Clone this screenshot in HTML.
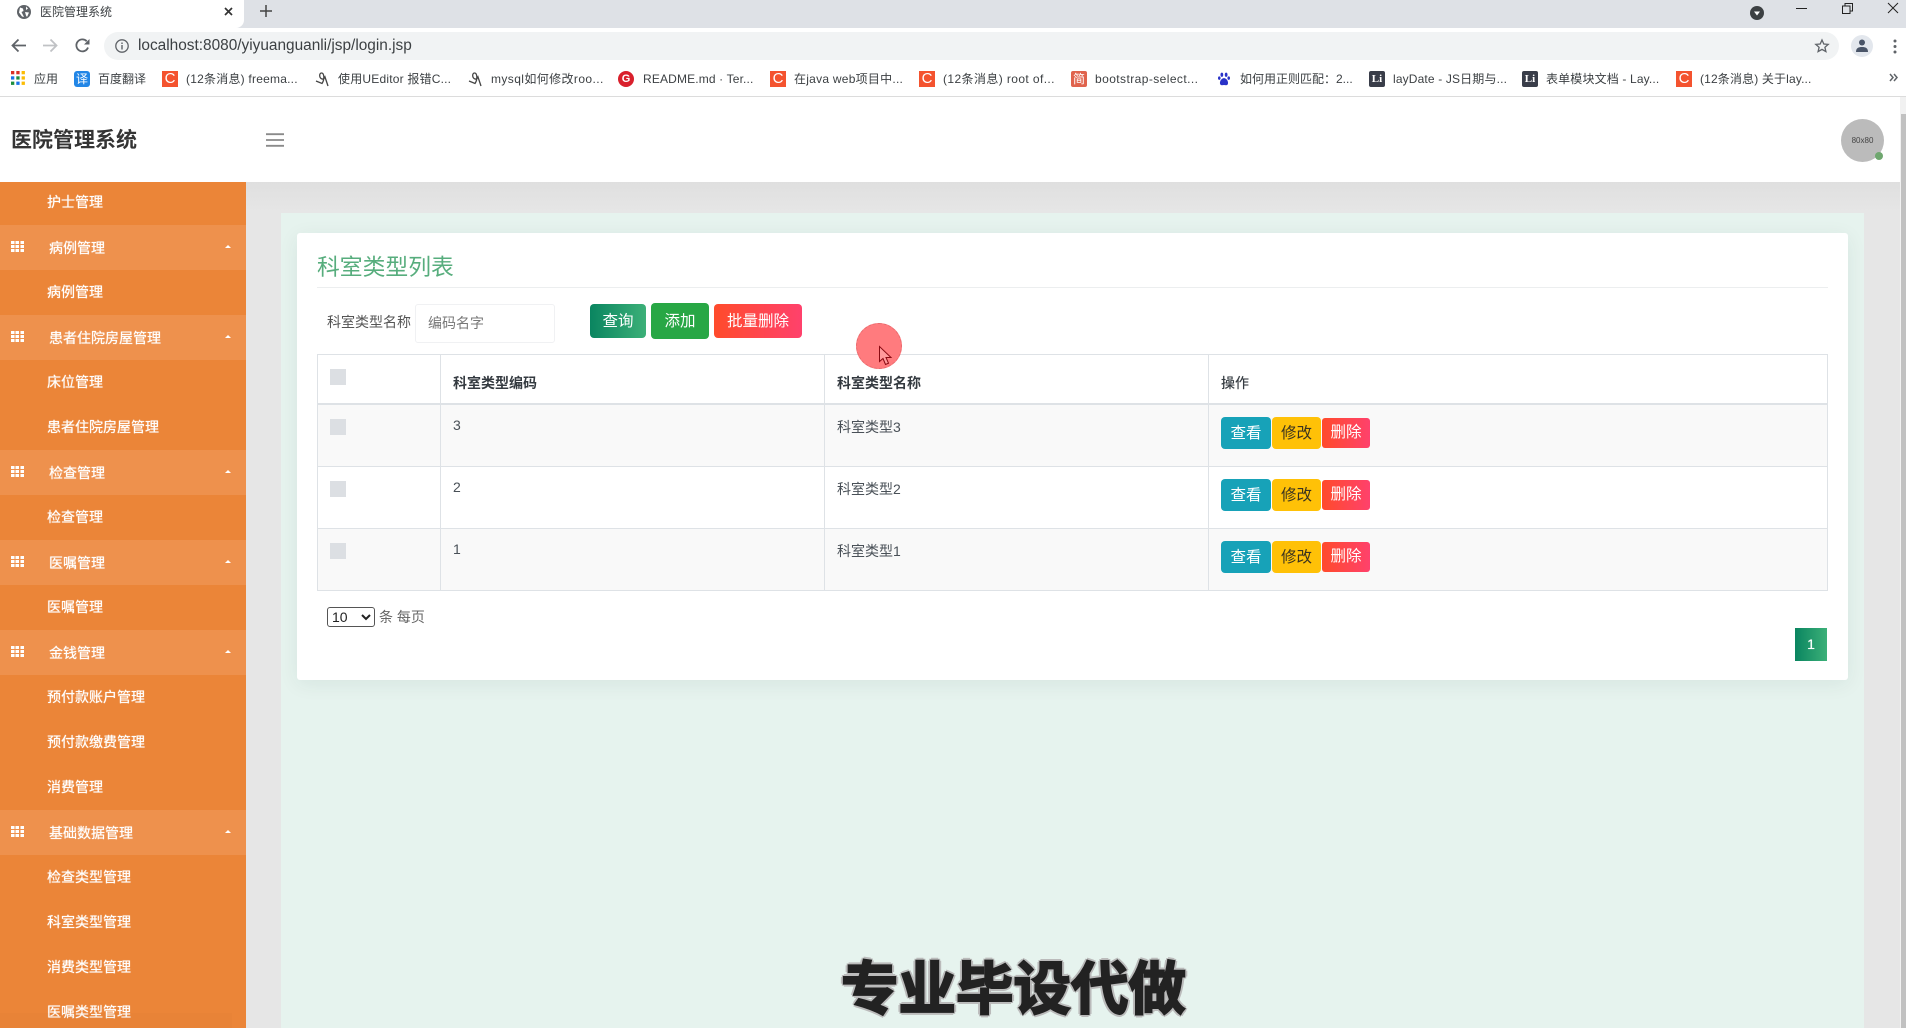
<!DOCTYPE html>
<html><head><meta charset="utf-8"><title>医院管理系统</title>
<style>
*{box-sizing:border-box}
html,body{margin:0;padding:0;width:1906px;height:1028px;overflow:hidden;background:#fff}
body{position:relative;font-family:"Liberation Sans","Noto Sans CJK SC",sans-serif}
.a{position:absolute;white-space:nowrap}
svg{position:absolute;overflow:visible}
.bm{position:absolute;top:69px;height:20px;line-height:20px;font-size:12px;color:#3c4043;white-space:nowrap}
.c{position:absolute;top:71px;width:16px;height:16px;background:#f4532f;color:#fff;font-size:15px;line-height:16px;text-align:center;font-family:"Liberation Sans",sans-serif}
.li{position:absolute;top:71px;width:16px;height:16px;background:#393d49;border-radius:2px;color:#fff;font:bold 11px/16px "Liberation Serif",serif;text-align:center}
.s{position:absolute;left:47px;width:190px;height:20px;line-height:20px;font-size:14px;color:#fff;text-shadow:0 0 .8px #fff;white-space:nowrap}
.g{position:absolute;left:0;width:246px;height:45px;background:#ee914d}
.g span{position:absolute;left:49px;top:13px;line-height:20px;font-size:14px;color:#fff;text-shadow:0 0 .8px #fff;white-space:nowrap}
.g i{position:absolute;left:10.500px;top:15.500px;width:13px;height:11px;background:
 repeating-linear-gradient(90deg,#fff 0 3.500px,transparent 3.500px 4.750px)}
.g i:after{content:"";position:absolute;left:0;right:0;top:3px;height:1px;background:#ee914d;box-shadow:0 4px 0 #ee914d}
.g b{position:absolute;left:225px;top:20px;width:0;height:0;border:3.500px solid transparent;border-top:0;border-bottom:3px solid #fff}
.hl{position:absolute;background:#dee2e6}
.th{position:absolute;top:373px;line-height:20px;font-size:14px;font-weight:bold;color:#343a40;white-space:nowrap}
.td{position:absolute;line-height:20px;font-size:14px;color:#495057;white-space:nowrap}
.cb{position:absolute;left:330px;width:16px;height:16px;background:#dcdfe3}
.btn{position:absolute;color:#fff;font-size:15.500px;text-align:center;white-space:nowrap}
.v{left:1221px;width:50px;height:32px;line-height:33px;background:#17a2b8;border-radius:4px}
.m{left:1272px;width:49px;height:32px;line-height:33px;background:#ffc107;border-radius:4px;color:#3a3320}
.d{left:1322px;width:48px;height:30px;line-height:30px;background:linear-gradient(90deg,#ff4b2b,#ff416c);border-radius:3px}
</style></head><body>

<!-- browser chrome -->
<div class="a" style="left:0;top:0;width:1906px;height:28px;background:#dee1e6"></div>
<div class="a" style="left:0;top:0;width:244px;height:28px;background:#fff;border-radius:0 0 8px 0"></div>
<div class="a" style="left:0;top:28px;width:1906px;height:68px;background:#fff"></div>
<div class="a" style="left:0;top:96px;width:1906px;height:1px;background:#dcdcdc"></div>
<svg style="left:17px;top:5px" width="14" height="14" viewBox="0 0 14 14"><circle cx="7" cy="7" r="7" fill="#5f6368"/><path d="M3 2.500l3 1 .5 2.500-2 1 1.500 3 1 2-2-.5-3-4zM9 1.500l2 2-2 1.500zM8 7l4 .5-2 4.500-1-1.500z" fill="#fff"/></svg>
<div class="a" style="left:40px;top:2px;font-size:12px;line-height:20px;color:#3c4043">医院管理系统</div>
<svg style="left:224px;top:7px" width="9" height="9" viewBox="0 0 9 9"><path d="M1 1l7 7M8 1l-7 7" stroke="#333" stroke-width="1.700"/></svg>
<svg style="left:260px;top:5px" width="12" height="12" viewBox="0 0 12 12"><path d="M6 0v12M0 6h12" stroke="#444" stroke-width="1.500"/></svg>
<svg style="left:1750px;top:6px" width="14" height="14" viewBox="0 0 14 14"><circle cx="7" cy="7" r="7" fill="#3c4043"/><path d="M4 5.500h6L7 9.500z" fill="#fff"/></svg>
<svg style="left:1796px;top:8px" width="11" height="2"><path d="M0 .5h11" stroke="#222" stroke-width="1"/></svg>
<svg style="left:1842px;top:3px" width="11" height="11" viewBox="0 0 11 11"><path d="M.5 3h7.500v7.500H.5zM3 3V.5h7.500V8H8" fill="none" stroke="#222" stroke-width="1"/></svg>
<svg style="left:1888px;top:3px" width="10" height="10" viewBox="0 0 10 10"><path d="M0 0l10 10M10 0L0 10" stroke="#222" stroke-width="1"/></svg>

<svg style="left:11px;top:38px" width="15" height="15" viewBox="0 0 15 15"><path d="M15 7.500H1.500M7.500 1.500l-6 6 6 6" fill="none" stroke="#5f6368" stroke-width="1.800"/></svg>
<svg style="left:43px;top:38px" width="15" height="15" viewBox="0 0 15 15"><path d="M0 7.500h13.500M7.500 1.500l6 6-6 6" fill="none" stroke="#c0c2c5" stroke-width="1.800"/></svg>
<svg style="left:75px;top:38px" width="15" height="15" viewBox="0 0 15 15"><path d="M13 9.500A6 6 0 1 1 11.700 3.200" fill="none" stroke="#5f6368" stroke-width="1.800"/><path d="M9 6.500h5.500V1z" fill="#5f6368"/></svg>
<div class="a" style="left:104px;top:32px;width:1735px;height:28px;background:#f1f3f4;border-radius:14px"></div>
<svg style="left:115px;top:39px" width="14" height="14" viewBox="0 0 14 14"><circle cx="7" cy="7" r="6.200" fill="none" stroke="#5f6368" stroke-width="1.300"/><path d="M7 6v4.500M7 3.500v1.500" stroke="#5f6368" stroke-width="1.400"/></svg>
<div class="a" style="left:138px;top:36px;font-size:15.400px;line-height:20px;color:#3c4043">localhost:8080/yiyuanguanli/jsp/login.jsp</div>
<svg style="left:1815px;top:39px" width="14" height="14" viewBox="0 0 14 14"><path d="M7 1l1.800 4 4.400.4-3.300 2.900 1 4.300L7 10.400l-3.900 2.200 1-4.300L.8 5.400 5.200 5z" fill="none" stroke="#5f6368" stroke-width="1.300"/></svg>
<div class="a" style="left:1851px;top:35px;width:22px;height:22px;border-radius:50%;background:#e3e7ed"></div>
<svg style="left:1855px;top:39px" width="14" height="14" viewBox="0 0 14 14"><circle cx="7" cy="3.500" r="3" fill="#4a5568"/><path d="M1 13c0-4 2.500-5 6-5s6 1 6 5z" fill="#4a5568"/></svg>
<svg style="left:1893px;top:39px" width="4" height="15" viewBox="0 0 4 15"><circle cx="2" cy="2" r="1.500" fill="#5f6368"/><circle cx="2" cy="7.500" r="1.500" fill="#5f6368"/><circle cx="2" cy="13" r="1.500" fill="#5f6368"/></svg>

<!-- bookmarks -->
<svg style="left:11px;top:71px" width="14" height="14" viewBox="0 0 14 14"><g><rect width="3.300" height="3.300" x="0" y="0" fill="#d93025"/><rect width="3.300" height="3.300" x="5.300" y="0" fill="#d93025"/><rect width="3.300" height="3.300" x="10.600" y="0" fill="#fbbc04"/><rect width="3.300" height="3.300" x="0" y="5.300" fill="#1a73e8"/><rect width="3.300" height="3.300" x="5.300" y="5.300" fill="#1e8e3e"/><rect width="3.300" height="3.300" x="10.600" y="5.300" fill="#fbbc04"/><rect width="3.300" height="3.300" x="0" y="10.600" fill="#1e8e3e"/><rect width="3.300" height="3.300" x="5.300" y="10.600" fill="#1a73e8"/><rect width="3.300" height="3.300" x="10.600" y="10.600" fill="#fbbc04"/></g></svg>
<div class="bm" style="left:34px">应用</div>
<div class="a" style="left:74px;top:71px;width:16px;height:16px;background:#2286e6;border-radius:3px;color:#fff;font-size:12px;line-height:16px;text-align:center">译</div>
<div class="bm" style="left:98px">百度翻译</div>
<div class="c" style="left:162px">C</div>
<div class="bm" style="left:186px;letter-spacing:.22px">(12条消息) freema...</div>
<svg style="left:315px;top:71px" width="15" height="16" viewBox="0 0 15 16"><path d="M1 10l6 2.500C10 8 9 2 6.500 2S4 7 7 8c2 .5 3-2 3-2l3 9" fill="none" stroke="#444" stroke-width="1.300"/></svg>
<div class="bm" style="left:338px;letter-spacing:.2px">使用UEditor 报错C...</div>
<svg style="left:468px;top:71px" width="15" height="16" viewBox="0 0 15 16"><path d="M1 10l6 2.500C10 8 9 2 6.500 2S4 7 7 8c2 .5 3-2 3-2l3 9" fill="none" stroke="#444" stroke-width="1.300"/></svg>
<div class="bm" style="left:491px;letter-spacing:.4px">mysql如何修改roo...</div>
<div class="a" style="left:618px;top:71px;width:16px;height:16px;border-radius:50%;background:#d9202c;color:#fff;font:bold 11px/16px 'Liberation Sans',sans-serif;text-align:center">G</div>
<div class="bm" style="left:643px;letter-spacing:.15px">README.md · Ter...</div>
<div class="c" style="left:770px">C</div>
<div class="bm" style="left:794px;letter-spacing:.25px">在java web项目中...</div>
<div class="c" style="left:919px">C</div>
<div class="bm" style="left:943px;letter-spacing:.4px">(12条消息) root of...</div>
<div class="a" style="left:1071px;top:71px;width:16px;height:16px;background:#e0634d;border-radius:2px;color:#fff;font-size:12px;line-height:16px;text-align:center">简</div>
<div class="bm" style="left:1095px;letter-spacing:.42px">bootstrap-select...</div>
<svg style="left:1218px;top:72px" width="12" height="14" viewBox="0 0 14 16"><g fill="#2932c8"><ellipse cx="4.500" cy="3" rx="1.600" ry="2.500"/><ellipse cx="9.500" cy="3" rx="1.600" ry="2.500"/><ellipse cx="1.500" cy="7" rx="1.500" ry="2"/><ellipse cx="12.500" cy="7" rx="1.500" ry="2"/><path d="M7 7c-3 0-5.500 4-4.500 7 1 2 3 1 4.500 1s3.500 1 4.500-1c1-3-1.500-7-4.500-7z"/></g></svg>
<div class="bm" style="left:1240px">如何用正则匹配：2...</div>
<div class="li" style="left:1369px">Li</div>
<div class="bm" style="left:1393px;letter-spacing:.15px">layDate - JS日期与...</div>
<div class="li" style="left:1522px">Li</div>
<div class="bm" style="left:1546px;letter-spacing:.15px">表单模块文档 - Lay...</div>
<div class="c" style="left:1676px">C</div>
<div class="bm" style="left:1700px;letter-spacing:.15px">(12条消息) 关于lay...</div>
<svg style="left:1889px;top:73px" width="9" height="9" viewBox="0 0 9 9"><path d="M1 1l3 3.500-3 3.500M5 1l3 3.500-3 3.500" fill="none" stroke="#5f6368" stroke-width="1.500"/></svg>

<!-- app header -->
<div class="a" style="left:0;top:97px;width:1900px;height:85px;background:#fff"></div>
<div class="a" style="left:11px;top:126px;font-size:21px;line-height:30px;font-weight:bold;color:#343434">医院管理系统</div>
<svg style="left:266px;top:133px" width="18" height="14" viewBox="0 0 18 14"><path d="M0 1.200h18M0 7h18M0 12.800h18" stroke="#8a8a8a" stroke-width="1.800"/></svg>
<div class="a" style="left:1841px;top:119px;width:43px;height:43px;border-radius:50%;background:#bbb;color:#444;font-size:8px;line-height:43px;text-align:center">80x80</div>
<div class="a" style="left:1875px;top:152px;width:8px;height:8px;border-radius:50%;background:#6fa76f"></div>

<!-- scrollbar -->
<div class="a" style="left:1900px;top:97px;width:6px;height:931px;background:#f1f1f1"></div>
<div class="a" style="left:1901px;top:114px;width:5px;height:914px;background:#c1c1c1"></div>

<!-- page bg -->
<div class="a" style="left:246px;top:182px;width:1654px;height:846px;background:#e6e6e6"></div>
<div class="a" style="left:246px;top:182px;width:1654px;height:30px;background:linear-gradient(#dfdfdf,#e6e6e6)"></div>
<div class="a" style="left:281px;top:213px;width:1583px;height:815px;background:#e6f3ee"></div>

<!-- sidebar -->
<div class="a" style="left:0;top:182px;width:246px;height:846px;background:#eb8538;overflow:hidden"></div>
<div class="s" style="top:192px">护士管理</div>
<div class="g" style="top:225px"><i></i><span>病例管理</span><b></b></div>
<div class="s" style="top:282px">病例管理</div>
<div class="g" style="top:315px"><i></i><span>患者住院房屋管理</span><b></b></div>
<div class="s" style="top:372px">床位管理</div>
<div class="s" style="top:417px">患者住院房屋管理</div>
<div class="g" style="top:450px"><i></i><span>检查管理</span><b></b></div>
<div class="s" style="top:507px">检查管理</div>
<div class="g" style="top:540px"><i></i><span>医嘱管理</span><b></b></div>
<div class="s" style="top:597px">医嘱管理</div>
<div class="g" style="top:630px"><i></i><span>金钱管理</span><b></b></div>
<div class="s" style="top:687px">预付款账户管理</div>
<div class="s" style="top:732px">预付款缴费管理</div>
<div class="s" style="top:777px">消费管理</div>
<div class="g" style="top:810px"><i></i><span>基础数据管理</span><b></b></div>
<div class="s" style="top:867px">检查类型管理</div>
<div class="s" style="top:912px">科室类型管理</div>
<div class="s" style="top:957px">消费类型管理</div>
<div class="s" style="top:1002px">医嘱类型管理</div>
<div class="a" style="left:0;top:1013px;width:232px;height:15px;background:rgba(170,90,30,.05)"></div>

<!-- card -->
<div class="a" style="left:297px;top:233px;width:1551px;height:447px;background:#fff;border-radius:3px;box-shadow:0 4px 20px rgba(0,60,60,.07)"></div>
<div class="a" style="left:317px;top:251px;font-size:22.800px;line-height:32px;color:#57ad7d">科室类型列表</div>
<div class="hl" style="left:317px;top:287px;width:1511px;height:1px;background:#eceeef"></div>
<div class="a" style="left:327px;top:312px;font-size:14px;line-height:20px;color:#555">科室类型名称</div>
<div class="a" style="left:415px;top:304px;width:140px;height:39px;border:1px solid #f0f1f3;border-radius:3px;background:#fff;padding-left:12px;font-size:14px;line-height:37px;color:#777">编码名字</div>
<div class="btn" style="left:590px;top:304px;width:56px;height:34px;line-height:35px;background:linear-gradient(90deg,#0a8560,#3cb078);border-radius:4px">查询</div>
<div class="btn" style="left:651px;top:303px;width:58px;height:36px;line-height:37px;background:#28a745;border-radius:4px">添加</div>
<div class="btn" style="left:714px;top:304px;width:88px;height:34px;line-height:35px;background:linear-gradient(90deg,#ff4b2b,#ff416c);border-radius:4px">批量删除</div>

<!-- table -->
<div class="a" style="left:317px;top:403px;width:1511px;height:63px;background:#f9f9f9"></div>
<div class="a" style="left:317px;top:528px;width:1511px;height:62px;background:#f9f9f9"></div>
<div class="hl" style="left:317px;top:354px;width:1511px;height:1px"></div>
<div class="hl" style="left:317px;top:403px;width:1511px;height:2px"></div>
<div class="hl" style="left:317px;top:466px;width:1511px;height:1px"></div>
<div class="hl" style="left:317px;top:528px;width:1511px;height:1px"></div>
<div class="hl" style="left:317px;top:590px;width:1511px;height:1px"></div>
<div class="hl" style="left:317px;top:354px;width:1px;height:237px"></div>
<div class="hl" style="left:440px;top:354px;width:1px;height:237px"></div>
<div class="hl" style="left:824px;top:354px;width:1px;height:237px"></div>
<div class="hl" style="left:1208px;top:354px;width:1px;height:237px"></div>
<div class="hl" style="left:1827px;top:354px;width:1px;height:237px"></div>

<div class="cb" style="top:369px"></div>
<div class="th" style="left:453px">科室类型编码</div>
<div class="th" style="left:837px">科室类型名称</div>
<div class="th" style="left:1221px;font-weight:normal;text-shadow:0 0 .5px #343a40">操作</div>

<div class="cb" style="top:419px"></div>
<div class="td" style="left:453px;top:415px">3</div>
<div class="td" style="left:837px;top:417px">科室类型3</div>
<div class="btn v" style="top:417px">查看</div><div class="btn m" style="top:417px">修改</div><div class="btn d" style="top:418px">删除</div>

<div class="cb" style="top:481px"></div>
<div class="td" style="left:453px;top:477px">2</div>
<div class="td" style="left:837px;top:479px">科室类型2</div>
<div class="btn v" style="top:479px">查看</div><div class="btn m" style="top:479px">修改</div><div class="btn d" style="top:480px">删除</div>

<div class="cb" style="top:543px"></div>
<div class="td" style="left:453px;top:539px">1</div>
<div class="td" style="left:837px;top:541px">科室类型1</div>
<div class="btn v" style="top:541px">查看</div><div class="btn m" style="top:541px">修改</div><div class="btn d" style="top:542px">删除</div>

<!-- footer -->
<div class="a" style="left:327px;top:607px;width:48px;height:20px;border:1px solid #555;border-radius:3px;background:#fff;font-size:14px;line-height:18px;padding-left:4px;color:#222">10</div>
<svg style="left:361px;top:614px" width="10" height="7" viewBox="0 0 10 7"><path d="M1 1l4 4 4-4" fill="none" stroke="#222" stroke-width="2"/></svg>
<div class="a" style="left:379px;top:607px;font-size:14px;line-height:20px;color:#666">条 每页</div>
<div class="a" style="left:1795px;top:628px;width:32px;height:33px;background:linear-gradient(90deg,#0a8560,#3cb078);color:#fff;font-size:14px;line-height:33px;text-align:center;text-shadow:0 0 .6px #fff">1</div>

<!-- mouse highlight -->
<div class="a" style="left:856px;top:323px;width:46px;height:46px;border-radius:50%;background:#ff7b7e;border:1px dashed #e8696c"></div>
<svg style="left:879px;top:346px" width="14" height="20" viewBox="0 0 14 20"><path d="M.5.500v15l3.500-3 2.500 6 3-1.300-2.500-5.700h5z" fill="#ff9a9c" stroke="#8a0a12" stroke-width="1"/></svg>

<!-- watermark -->
<div class="a" style="left:841px;top:952px;font-size:57.500px;line-height:76px;font-weight:bold;color:#222;-webkit-text-stroke:2px #222;text-shadow:-2px -2px 0 #bbb,2px -2px 0 #bbb,-2px 2px 0 #bbb,2px 2px 0 #bbb,0 -3px 0 #bbb,0 3px 0 #bbb,-3px 0 0 #bbb,3px 0 0 #bbb">专业毕设代做</div>

</body></html>
